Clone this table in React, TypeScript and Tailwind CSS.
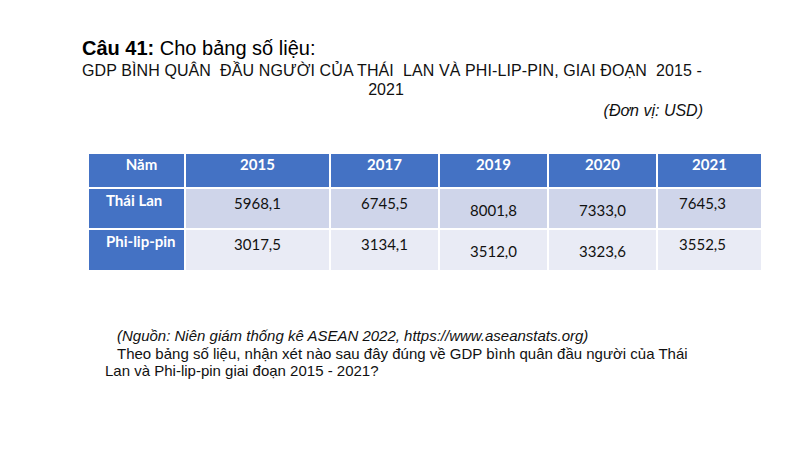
import React from "react";

const rows = [
  { label: "Thái Lan", values: ["5968,1", "6745,5", "8001,8", "7333,0", "7645,3"], bg: "bg-[#cfd5ea]" },
  { label: "Phi-lip-pin", values: ["3017,5", "3134,1", "3512,0", "3323,6", "3552,5"], bg: "bg-[#e9ebf5]" },
];

const years = ["2015", "2017", "2019", "2020", "2021"];

export default function App() {
  return (
    <div className="w-[800px] h-[450px] bg-white text-black overflow-hidden pl-[82px] pt-[36px]" style={{ fontFamily: '"Liberation Sans", Arial, sans-serif' }}>
      <div className="text-[20px] leading-[24px] whitespace-nowrap">
        <span className="font-bold">Câu 41:</span> Cho bảng số liệu:
      </div>
      <div className="mt-[1px] text-[16px] leading-[19px] w-[623px] whitespace-pre text-[#111]">
        <div className="tracking-[0.1px]">GDP BÌNH QUÂN  ĐẦU NGƯỜI CỦA THÁI  LAN VÀ PHI-LIP-PIN, GIAI ĐOẠN  2015 -</div>
        <div className="w-[608px] text-center">2021</div>
        <div className="text-right italic pr-[2px] mt-[2px]">(Đơn vị: USD)</div>
      </div>

      <div
        className="mt-[34px] ml-[7px] grid grid-cols-[95px_143px_107px_107px_107px_103px] grid-rows-[33px_39px_40px] gap-[2px] w-[672px] text-[15px] leading-[18px]"
        style={{ fontFamily: 'Lato, "Open Sans", sans-serif' }}
      >
        <div className="bg-[#4472c4] text-white font-bold text-center pl-[10px] pt-[1px]">Năm</div>
        {years.map((y) => (
          <div key={y} className="bg-[#4472c4] text-white font-bold text-center pt-[1px]">
            {y}
          </div>
        ))}
        {rows.map((r) => (
          <React.Fragment key={r.label}>
            <div className="bg-[#4472c4] text-white font-bold pl-[17px] pt-[2px]">{r.label}</div>
            {r.values.map((v, i) => (
              <div
                key={i}
                className={`${r.bg} text-[#111] flex justify-center ${i === 2 || i === 3 ? "items-center pt-[2px]" : "items-start pt-[5px]"} ${i === 4 ? "pr-[14px]" : ""}`}
              >
                {v}
              </div>
            ))}
          </React.Fragment>
        ))}
      </div>

      <div className="mt-[56px] ml-[23px] text-[15px] w-[640px] whitespace-nowrap text-[#111]">
        <div className="italic pl-[12px] leading-[19px]">(Nguồn: Niên giám thống kê ASEAN 2022, https://www.aseanstats.org)</div>
        <div className="leading-[17px]">
          <div className="pl-[12px]">Theo bảng số liệu, nhận xét nào sau đây đúng về GDP bình quân đầu người của Thái</div>
          <div>Lan và Phi-lip-pin giai đoạn 2015 - 2021?</div>
        </div>
      </div>
    </div>
  );
}
